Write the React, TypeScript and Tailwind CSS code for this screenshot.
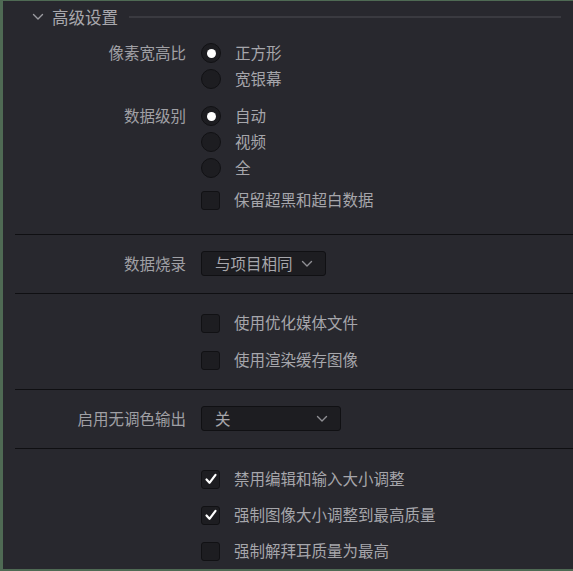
import React from "react";

const FONT = { fontFamily: '"Noto Sans CJK SC", "Noto Sans", sans-serif' };

function Chevron({ className = "" }: { className?: string }) {
  return (
    <svg width="12" height="8" viewBox="0 0 12 8" className={className}>
      <path d="M1.5 1.5 L6 6 L10.5 1.5" fill="none" stroke="currentColor" strokeWidth="1.4" strokeLinecap="round" strokeLinejoin="round" />
    </svg>
  );
}

function Radio({ checked }: { checked?: boolean }) {
  return (
    <div className="w-[20px] h-[20px] rounded-full bg-[#1d1d21] border border-[#111114] flex items-center justify-center shrink-0">
      {checked && <div className="w-[9px] h-[9px] rounded-full bg-white" />}
    </div>
  );
}

function Check({ checked }: { checked?: boolean }) {
  return (
    <div className="w-[19px] h-[19px] rounded-[3px] bg-[#1d1d21] border border-[#111114] flex items-center justify-center shrink-0">
      {checked && (
        <svg width="14" height="14" viewBox="0 0 14 14">
          <path d="M2.5 7.5 L5.5 10.8 L11.5 2.8" fill="none" stroke="white" strokeWidth="2.2" strokeLinecap="round" strokeLinejoin="round" />
        </svg>
      )}
    </div>
  );
}

function Row({ label, children }: { label?: string; children: React.ReactNode }) {
  return (
    <div className="flex items-center h-[26px]">
      <div className="w-[184px] text-right pr-[1px] text-[15.5px] text-[#a0a0a5] leading-none">{label ?? ""}</div>
      <div className="ml-[14px] flex items-center">{children}</div>
    </div>
  );
}

function Opt({ control, text }: { control: React.ReactNode; text: string }) {
  return (
    <div className="flex items-center">
      {control}
      <span className="ml-[14px] text-[15.5px] text-[#a6a6ab] leading-none">{text}</span>
    </div>
  );
}

function Divider() {
  return <div className="ml-[12px] h-px bg-[#0f0f12]" />;
}

function Dropdown({ text, width }: { text: string; width: string }) {
  return (
    <div className={`${width} h-[25px] rounded-[3px] bg-[#1d1d21] border border-[#101013] flex items-center justify-between pl-[13px] pr-[12px] text-[15.5px] text-[#a6a6ab] leading-none`}>
      <span>{text}</span>
      <Chevron className="text-[#8f8f94]" />
    </div>
  );
}

export default function App() {
  return (
    <div className="w-[573px] h-[571px] bg-[#4f6a54] pl-[3px] pt-[1px] pb-[2px] overflow-hidden" style={FONT}>
      <div className="h-full bg-[#28282e] flex flex-col">
        <div className="h-[32px] flex items-center shrink-0">
          <Chevron className="ml-[29px] text-[#9b9ba0]" />
          <span className="ml-[8px] text-[16.5px] text-[#a8a8ad] leading-none">高级设置</span>
          <div className="ml-[11px] mr-[12px] flex-1 h-[2px] bg-[#3a3a40]" />
        </div>

        <div className="pt-[7px]">
          <Row label="像素宽高比"><Opt control={<Radio checked />} text="正方形" /></Row>
          <Row><Opt control={<Radio />} text="宽银幕" /></Row>
          <div className="h-[11px]" />
          <Row label="数据级别"><Opt control={<Radio checked />} text="自动" /></Row>
          <Row><Opt control={<Radio />} text="视频" /></Row>
          <Row><Opt control={<Radio />} text="全" /></Row>
          <div className="h-[6px]" />
          <Row><Opt control={<Check />} text="保留超黑和超白数据" /></Row>
          <div className="h-[21px]" />
        </div>
        <Divider />

        <div className="pt-[16px] pb-[17px]">
          <div className="flex items-center h-[25px]">
            <div className="w-[184px] text-right pr-[1px] text-[15.5px] text-[#a0a0a5] leading-none">数据烧录</div>
            <div className="ml-[14px]"><Dropdown text="与项目相同" width="w-[125px]" /></div>
          </div>
        </div>
        <Divider />

        <div className="pt-[16px] pb-[16px]">
          <Row><Opt control={<Check />} text="使用优化媒体文件" /></Row>
          <div className="h-[11px]" />
          <Row><Opt control={<Check />} text="使用渲染缓存图像" /></Row>
        </div>
        <Divider />

        <div className="pt-[16px] pb-[17px]">
          <div className="flex items-center h-[25px]">
            <div className="w-[184px] text-right pr-[1px] text-[15.5px] text-[#a0a0a5] leading-none">启用无调色输出</div>
            <div className="ml-[14px]"><Dropdown text="关" width="w-[140px]" /></div>
          </div>
        </div>
        <Divider />

        <div className="pt-[17px]">
          <Row><Opt control={<Check checked />} text="禁用编辑和输入大小调整" /></Row>
          <div className="h-[10px]" />
          <Row><Opt control={<Check checked />} text="强制图像大小调整到最高质量" /></Row>
          <div className="h-[10px]" />
          <Row><Opt control={<Check />} text="强制解拜耳质量为最高" /></Row>
        </div>
      </div>
    </div>
  );
}
